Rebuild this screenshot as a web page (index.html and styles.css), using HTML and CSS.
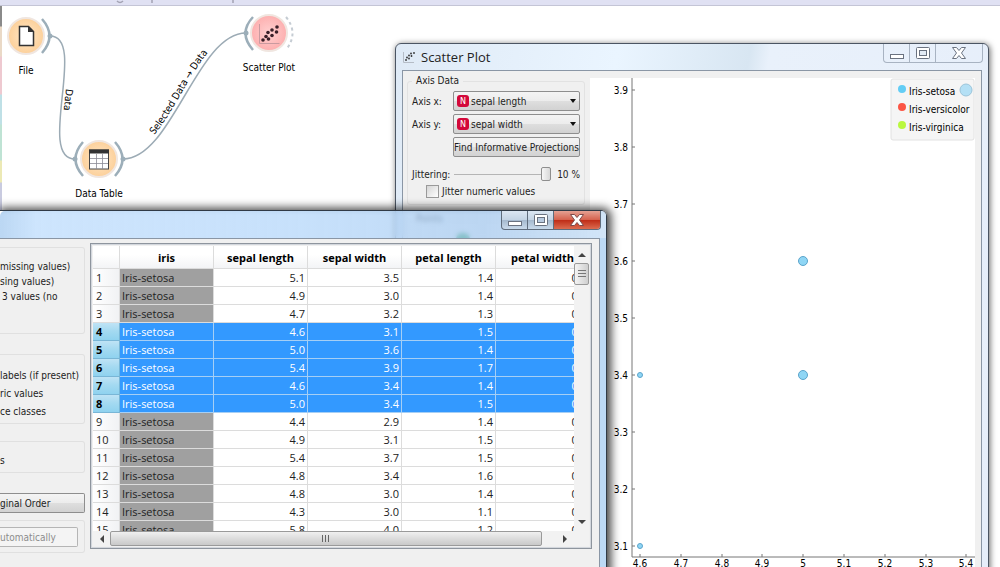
FILE: index.html
```html
<!DOCTYPE html>
<html lang="en">
<head>
    <meta charset="UTF-8">
    <meta name="viewport" content="width=device-width, initial-scale=1.0">
    <title>Orange Workflow</title>
    <link rel="stylesheet" href="styles.css">
</head>
<body>

<div class="desktop">
    <div class="app-bar">
        <svg width="260" height="6" viewBox="0 0 260 6">
            <path d="M117 1q3 3 6 0M152 0v3M233 0v3" fill="none" stroke="#a3a3b4" stroke-width="1.5"/>
        </svg>
    </div>

    <div class="canvas">
        <div class="toolbox-edge"></div>
        <svg class="workflow" width="320" height="201" viewBox="0 6 320 201">
            <defs>
                <path id="link-file" d="M50 36C88 36 36 159 75 159"/>
                <path id="link-plot" d="M123 159C172 159 197 33 246 33"/>
                <radialGradient id="orange"><stop offset="0" stop-color="#ffe6c6"/><stop offset="1" stop-color="#fcd09a"/></radialGradient>
                <radialGradient id="red"><stop offset="0" stop-color="#ffd0d0"/><stop offset="1" stop-color="#fdafaf"/></radialGradient>
            </defs>
            <g class="link">
                <use href="#link-file"/>
                <use href="#link-plot"/>
            </g>
            <text class="link-text" dy="-3"><textPath href="#link-file" startOffset="60">Data</textPath></text>
            <text class="link-text" dy="-4"><textPath href="#link-plot" startOffset="42">Selected Data → Data</textPath></text>

            <!-- File -->
            <circle class="node" cx="26" cy="36" r="18" fill="url(#orange)"/>
            <path class="anchor" d="M42 19Q57 36 42 53"/>
            <circle class="dot" cx="50" cy="36" r="2.5"/>
            <path d="M19.500 26.500h9l5 5v14h-14z" fill="#fff" stroke="#333" stroke-width="1.500"/>
            <path d="M28 26v6h6z" fill="#333"/>
            <text class="node-text" x="26" y="74">File</text>

            <!-- Data Table -->
            <circle class="node" cx="99" cy="159" r="18" fill="url(#orange)"/>
            <path class="anchor" d="M83 142Q68 159 83 176M115 142Q130 159 115 176"/>
            <circle class="dot" cx="75" cy="159" r="2.5"/>
            <circle class="dot" cx="123" cy="159" r="2.5"/>
            <rect x="89.500" y="150" width="19" height="19" fill="#fff" stroke="#444"/>
            <path d="M89 149.500h20v4h-20z" fill="#333"/>
            <path d="M90 158.500h18M90 163.500h18M96.500 154v15M102.500 154v15" stroke="#8b8b96" stroke-width=".8"/>
            <text class="node-text" x="99" y="197">Data Table</text>

            <!-- Scatter Plot -->
            <circle class="node" cx="269" cy="33" r="18" fill="url(#red)"/>
            <path class="anchor" d="M253 17Q238 33 253 50"/>
            <path class="anchor-empty" d="M286 17Q299 33 286 50"/>
            <circle class="dot" cx="246" cy="33" r="2.5"/>
            <path d="M259.500 24v19.500h20" fill="none" stroke="#c99a9f"/>
            <g fill="#3a2029">
                <circle cx="263" cy="40" r="1.8"/><circle cx="266" cy="36.500" r="1.8"/><circle cx="268.500" cy="39" r="1.8"/>
                <circle cx="268" cy="32.500" r="1.8"/><circle cx="272" cy="35.500" r="1.8"/><circle cx="272" cy="30" r="1.8"/>
                <circle cx="276.500" cy="32" r="1.8"/><circle cx="277" cy="27" r="1.8"/>
            </g>
            <text class="node-text" x="269" y="71">Scatter Plot</text>
        </svg>
    </div>

    <section class="window plot-window">
        <header class="titlebar">
            <svg class="title-icon" width="12" height="12" viewBox="0 0 12 12">
                <path d="M.5 1v10.500H11" fill="none" stroke="#b5bcc6"/>
                <g fill="#333"><circle cx="3" cy="9" r=".9"/><circle cx="4" cy="6.500" r=".9"/><circle cx="6" cy="7.500" r=".9"/><circle cx="6" cy="4.500" r=".9"/><circle cx="8.500" cy="5" r=".9"/><circle cx="8" cy="2.500" r=".9"/><circle cx="11" cy="2" r=".9"/></g>
            </svg>
            <h1>Scatter Plot</h1>
            <div class="window-buttons">
                <button aria-label="Minimize"><svg width="16" height="14"><rect x="1.500" y="8.500" width="13" height="4" fill="#fff" stroke="#6a7280"/></svg></button>
                <button aria-label="Maximize"><svg width="16" height="14"><rect x="1.500" y="1.500" width="13" height="11" rx="1" fill="#fff" stroke="#6a7280"/><rect x="4.500" y="4.500" width="7" height="5" fill="#e3ebf5" stroke="#6a7280"/></svg></button>
                <button class="close" aria-label="Close"><svg width="16" height="14"><path d="M1.500 1.500h4L8 4.500l2.500-3h4L10.500 7l4 5.500h-4L8 9.500l-2.500 3h-4L5.500 7z" fill="#fff" stroke="#6a7280"/></svg></button>
            </div>
        </header>
        <div class="client">
            <div class="controls">
                <fieldset class="group">
                    <legend>Axis Data</legend>
                    <div class="axis-row">
                        <label for="axis-x">Axis x:</label>
                        <div class="combo">
                            <span class="badge">N</span>
                            <select id="axis-x"><option>sepal length</option></select>
                        </div>
                    </div>
                    <div class="axis-row">
                        <label for="axis-y">Axis y:</label>
                        <div class="combo">
                            <span class="badge">N</span>
                            <select id="axis-y"><option>sepal width</option></select>
                        </div>
                    </div>
                    <button class="btn find">Find Informative Projections</button>
                    <div class="jitter-row">
                        <label for="jitter">Jittering:</label>
                        <input type="range" id="jitter" min="0" max="10" value="10">
                        <output for="jitter">10 %</output>
                    </div>
                    <label class="check"><input type="checkbox">Jitter numeric values</label>
                </fieldset>
                <fieldset class="group points">
                    <legend>Points</legend>
                    <span class="color-mark"></span>
                </fieldset>
            </div>
            <div class="plot">
                <svg id="plot" viewBox="0 0 385 496">
                    <rect x="301" y="1" width="83" height="61" rx="2" fill="#f5f5f5" stroke="#e2e2e2"/>
                    <g class="legend-text">
                        <circle cx="312" cy="11" r="4" fill="#63cdf5"/><text x="319" y="17">Iris-setosa</text>
                        <circle cx="312" cy="29" r="4" fill="#fb5545"/><text x="319" y="35">Iris-versicolor</text>
                        <circle cx="312" cy="47" r="4" fill="#b9f83f"/><text x="319" y="53">Iris-virginica</text>
                    </g>
                    <path class="axis" d="M42 0V479H385"/>
                    <g id="ticks"></g>
                    <g id="marks"></g>
                </svg>
            </div>
        </div>
    </section>

    <section class="window table-window">
        <header class="titlebar">
            <div class="window-buttons">
                <button aria-label="Minimize"><svg width="16" height="14"><rect x="1.500" y="8.500" width="13" height="4" fill="#fff" stroke="#6a7280"/></svg></button>
                <button aria-label="Maximize"><svg width="16" height="14"><rect x="1.500" y="1.500" width="13" height="11" rx="1" fill="#fff" stroke="#6a7280"/><rect x="4.500" y="4.500" width="7" height="5" fill="#b9cbe0" stroke="#6a7280"/></svg></button>
                <button class="close" aria-label="Close"><svg width="16" height="14"><path d="M1.500 1.500h4L8 4.500l2.500-3h4L10.500 7l4 5.500h-4L8 9.500l-2.500 3h-4L5.500 7z" fill="#fff" stroke="#7d4a4a"/></svg></button>
            </div>
        </header>
        <div class="client">
            <div class="side">
                <div class="box info">
                    <p>missing values)</p>
                    <p>sing values)</p>
                    <p class="indent">3 values (no</p>
                </div>
                <div class="box variables">
                    <p>labels (if present)</p>
                    <p>ric values</p>
                    <p>ce classes</p>
                </div>
                <div class="box selection">
                    <p>s</p>
                </div>
                <button class="btn order">ginal Order</button>
                <div class="box send">
                    <button class="btn" disabled>utomatically</button>
                </div>
            </div>
            <div class="table-frame">
                <div class="table-view">
                    <table>
                        <thead>
                            <tr><th class="num"></th><th>iris</th><th>sepal length</th><th>sepal width</th><th>petal length</th><th>petal width</th></tr>
                        </thead>
                        <tbody id="rows"></tbody>
                    </table>
                </div>
                <div class="scroll-v">
                    <button aria-label="Scroll up"><svg width="8" height="5"><path d="M0 5l4-4 4 4z" fill="#444"/></svg></button>
                    <div class="thumb"><svg width="8" height="10"><path d="M0 1.500h8M0 4.500h8M0 7.500h8" stroke="#777"/></svg></div>
                    <button class="end" aria-label="Scroll down"><svg width="8" height="5"><path d="M0 0l4 4 4-4z" fill="#444"/></svg></button>
                </div>
                <div class="scroll-h">
                    <button aria-label="Scroll left"><svg width="5" height="8"><path d="M5 0L1 4l4 4z" fill="#444"/></svg></button>
                    <div class="thumb"><svg width="10" height="8"><path d="M1.500 0v7M4.500 0v7M7.500 0v7" stroke="#666"/></svg></div>
                    <button class="end" aria-label="Scroll right"><svg width="5" height="8"><path d="M0 0l4 4-4 4z" fill="#444"/></svg></button>
                </div>
            </div>
        </div>
    </section>
</div>

<script src="script.js"></script>
</body>
</html>
```
FILE: styles.css
```css
* {
    box-sizing: border-box;
}

body {
    margin: 0;
    font-family: "DejaVu Sans Condensed", "DejaVu Sans", sans-serif;
    font-size: 10px;
    color: #222;
}

button,
select,
input {
    font: inherit;
    color: inherit;
    margin: 0;
}

p {
    margin: 0;
}

.desktop {
    position: relative;
    height: 100vh;
    overflow: hidden;
    background: #fff;
}

.app-bar {
    height: 6px;
    background: #e0e1f3;
    border-bottom: 1px solid #c4c5d6;
}

.app-bar svg {
    display: block;
}

/* Workflow canvas */
.canvas {
    display: flex;
}

.toolbox-edge {
    width: 2px;
    height: 205px;
    background: linear-gradient(#8a8a8a 20px, #ead9c6 21px, #ead9c6 50px, #eec9d0 51px, #eec9d0 88px, #bfe0e6 89px, #bfe0e6 118px, #bfe3d4 119px, #bfe3d4 154px, #ece9b5 155px, #ece9b5 176px, #c9cbe0 177px);
}

.workflow {
    display: block;
    margin-left: -2px;
}

.link {
    fill: none;
    stroke: #9cabb5;
    stroke-width: 1.5;
}

.node {
    stroke: #f0e6e0;
    stroke-width: 2;
}

.anchor {
    fill: none;
    stroke: #9caeb9;
    stroke-width: 2.5;
}

.anchor-empty {
    fill: none;
    stroke: #c5ccd3;
    stroke-width: 2;
    stroke-dasharray: 3 3;
}

.dot {
    fill: #9caeb9;
}

.node-text {
    text-anchor: middle;
}

/* Windows */
.window {
    position: absolute;
    display: flex;
    flex-direction: column;
    border: 1px solid #4b5563;
    border-radius: 6px 6px 0 0;
}

.titlebar {
    display: flex;
    flex: none;
    align-items: center;
    padding-left: 7px;
    border-radius: 5px 5px 0 0;
}

.titlebar h1 {
    margin: 0 0 0 6px;
    font: 13px "Open Sans", sans-serif;
}

.window-buttons {
    display: flex;
    align-self: flex-start;
    margin-left: auto;
    border: 1px solid #a8b3c2;
    border-top: 0;
    border-radius: 0 0 4px 4px;
    overflow: hidden;
}

.window-buttons button {
    display: flex;
    align-items: center;
    justify-content: center;
    width: 26px;
    height: 18px;
    padding: 0;
    border: 0;
    border-right: 1px solid #a8b3c2;
    background: none;
}

.window-buttons .close {
    width: 46px;
    border-right: 0;
}

.client {
    display: flex;
    flex: 1;
    background: #f0f0f0;
    border: 1px solid #8a96a5;
    border-bottom: 0;
}

.btn {
    height: 20px;
    padding: 0;
    border: 1px solid #8e8e8e;
    border-radius: 2px;
    background: linear-gradient(#f4f4f4, #ececec 50%, #dedede 51%, #d2d2d2);
    white-space: nowrap;
}

/* Scatter plot window */
.plot-window {
    top: 43px;
    left: 395px;
    right: 11px;
    bottom: -10px;
    background: linear-gradient(100deg, #dfeaf6, #eaf5ff 220px, #d8e6f2 350px, #e9f1fb 370px, #e6eefa);
    box-shadow: 1px 1px 6px rgba(0, 0, 0, 0.6);
}

.plot-window .titlebar {
    height: 26px;
    margin-right: 5px;
}

.plot-window .client {
    margin: 0 6px;
    padding: 4px 6px 0 4px;
}

.controls {
    width: 178px;
    flex: none;
}

.group {
    min-width: 0;
    margin: 0;
    padding: 4px 4px 6px;
    border: 1px solid #e2e2e2;
    border-radius: 3px;
}

.group legend {
    padding: 0 4px;
    line-height: 12px;
}

.axis-row,
.jitter-row {
    display: flex;
    align-items: center;
    height: 20px;
    margin-bottom: 3px;
}

.axis-row label {
    width: 41px;
}

.combo {
    position: relative;
    flex: 1;
    min-width: 0;
}

.combo select {
    display: block;
    width: 100%;
    height: 20px;
    padding: 0 0 0 17px;
    appearance: none;
    border: 1px solid #8e8e8e;
    border-radius: 2px;
    background: linear-gradient(#f4f4f4, #ececec 50%, #dedede 51%, #d2d2d2);
}

.combo::after {
    content: "";
    position: absolute;
    top: 8px;
    right: 4px;
    border: 3px solid transparent;
    border-top: 4px solid #111;
    border-bottom: 0;
}

.badge {
    position: absolute;
    top: 4px;
    left: 4px;
    width: 12px;
    height: 12px;
    border-radius: 3px;
    background: #d3083a;
    color: #fff;
    font-size: 9px;
    line-height: 12px;
    text-align: center;
}

.find {
    display: block;
    width: 127px;
    margin-left: 41px;
}

.jitter-row {
    margin-top: 7px;
    margin-bottom: 1px;
}

.jitter-row input {
    flex: 1;
    min-width: 0;
    height: 16px;
    margin: 0 6px 0 4px;
    appearance: none;
    background: linear-gradient(#b5b5b5, #b5b5b5) center / 100% 1px no-repeat;
}

.jitter-row input::-webkit-slider-thumb {
    appearance: none;
    width: 10px;
    height: 14px;
    border: 1px solid #8e8e8e;
    border-radius: 2px;
    background: linear-gradient(90deg, #f6f6f6, #d8d8d8);
}

.check {
    display: flex;
    align-items: center;
    margin-left: 14px;
}

.check input {
    appearance: none;
    width: 13px;
    height: 13px;
    margin-right: 3px;
    border: 1px solid #9a9a9a;
    background: linear-gradient(135deg, #d5d5d5, #fff);
}

.points {
    margin-top: 8px;
    height: 300px;
}

.color-mark {
    display: block;
    width: 14px;
    height: 12px;
    margin: 4px 0 0 44px;
    border-radius: 6px;
    background: #1d9a52;
}

.plot {
    flex: 1;
    margin-top: 3px;
    margin-left: 5px;
    background: #fff;
}

.plot svg {
    display: block;
    width: 100%;
}

.plot .axis {
    fill: none;
    stroke: #777;
}

.tick-x {
    text-anchor: middle;
}

.tick-y {
    text-anchor: end;
}

.mark {
    fill: #8fd6f5;
    stroke: #5ba4cb;
}

.mark.outside {
    fill: #b4e0f5;
    stroke: #9cc5da;
}

/* Data table window */
.table-window {
    top: 210px;
    left: -1px;
    bottom: -10px;
    width: 608px;
    border-color: #303a46;
    border-top-left-radius: 0;
    box-shadow: 2px 0 10px 2px rgba(0, 0, 0, 0.75);
}

.table-window .titlebar {
    height: 27px;
    padding-right: 5px;
    background: linear-gradient(90deg, rgba(170, 205, 240, 0.8), rgba(200, 226, 253, 0.9) 6%, rgba(185, 217, 250, 0.8) 50%, rgba(170, 205, 242, 0.75) 80%, rgba(205, 226, 247, 0.9));
    backdrop-filter: blur(2px);
}

.table-window .window-buttons {
    border-color: #5f6c7c;
    background: linear-gradient(#dbe6f2, #c3d3e4 50%, #a5b9ce 51%, #c9daeb);
}

.table-window .window-buttons button {
    border-color: #5f6c7c;
}

.table-window .window-buttons .close {
    background: linear-gradient(#e5a193, #d5604c 50%, #bf2c17 51%, #dc6c50);
}

.table-window .client {
    padding: 4px 7px 16px 0;
    border-left: 0;
    outline: 6px solid #bcd9f5;
    outline-offset: 0;
    clip-path: inset(0 -6px 0 0);
    margin-right: 6px;
}

.side {
    width: 90px;
    flex: none;
    padding: 4px 5px 0 0;
}

.box {
    border: 1px solid #e0e0e0;
    border-left: 0;
    border-radius: 0 3px 3px 0;
}

.box p {
    line-height: 18px;
    white-space: nowrap;
}

.info {
    height: 87px;
    padding-top: 11px;
}

.box.info p {
    line-height: 15px;
}

.info .indent {
    padding-left: 2px;
}

.variables {
    height: 70px;
    margin-top: 20px;
    padding-top: 12px;
}

.selection {
    height: 32px;
    margin-top: 17px;
    padding-top: 10px;
}

.side .btn {
    display: block;
    width: 100%;
    border-left: 0;
    border-radius: 0 2px 2px 0;
    text-align: left;
}

.order {
    margin-top: 20px;
}

.send {
    height: 33px;
    margin-top: 7px;
    padding: 6px 6px 0 0;
}

.side .btn:disabled {
    border-color: #b5b5b5;
    background: #f4f4f4;
    color: #8c8c8c;
}

.table-frame {
    display: grid;
    grid-template-columns: 1fr 15px;
    grid-template-rows: 285px 15px;
    flex: 1;
    align-self: flex-start;
    min-width: 0;
    padding: 2px;
    border: 1px solid #8e959e;
    outline: 1px solid #d3d7dd;
    outline-offset: -2px;
}

.table-view {
    overflow: hidden;
    background: #fff;
}

table {
    width: 497px;
    table-layout: fixed;
    border-collapse: separate;
    border-spacing: 0;
    font: 11px "Open Sans", sans-serif;
}

th,
td {
    height: 18px;
    padding: 0 2px;
    border-right: 1px solid #dcdcdc;
    border-bottom: 1px solid #dcdcdc;
    line-height: 17px;
    text-align: right;
}

thead th {
    height: 23px;
    padding: 0;
    background: linear-gradient(#fff 40%, #f3f4f6);
    color: #000;
    text-align: center;
}

.num {
    width: 27px;
}

tbody th {
    padding-left: 3px;
    background: linear-gradient(90deg, #fff, #f1f2f4);
    font-weight: normal;
    text-align: left;
}

td.iris {
    background: #a0a0a0;
    text-align: left;
}

.selected td {
    background: #3399ff;
    border-color: #a6cff5;
    color: #fff;
}

/* the selected rows win over the grey class column */
.selected td.iris {
    background: #3399ff;
}

.selected th {
    background: linear-gradient(#bfe3f5, #a5daf1 45%, #8fd2ef);
    border-color: #79b6d6;
    color: #000;
    font-weight: bold;
}

.scroll-v,
.scroll-h {
    display: flex;
    background: #f2f2f2;
}

.scroll-v {
    flex-direction: column;
}

.scroll-h {
    grid-column: 1 / 3;
}

.scroll-v button,
.scroll-h button {
    display: flex;
    align-items: center;
    justify-content: center;
    padding: 0;
    border: 0;
    background: none;
}

.scroll-v button {
    height: 17px;
}

.scroll-h button {
    width: 17px;
}

.scroll-v .end {
    margin-top: auto;
}

.scroll-h .end {
    margin-left: auto;
    width: 47px;
}

.thumb {
    display: flex;
    align-items: center;
    justify-content: center;
    border: 1px solid #9a9a9a;
    border-radius: 2px;
}

.scroll-v .thumb {
    height: 22px;
    background: linear-gradient(90deg, #f4f4f4, #cfcfcf);
}

.scroll-h .thumb {
    flex: 1;
    background: linear-gradient(#f0f0f0, #dcdcdc 50%, #c9c9c9);
}
```
FILE: script.js
```js
const irisRows = [
    ["5.1", "3.5", "1.4", "0.2"],
    ["4.9", "3.0", "1.4", "0.2"],
    ["4.7", "3.2", "1.3", "0.2"],
    ["4.6", "3.1", "1.5", "0.2"],
    ["5.0", "3.6", "1.4", "0.2"],
    ["5.4", "3.9", "1.7", "0.4"],
    ["4.6", "3.4", "1.4", "0.3"],
    ["5.0", "3.4", "1.5", "0.2"],
    ["4.4", "2.9", "1.4", "0.2"],
    ["4.9", "3.1", "1.5", "0.1"],
    ["5.4", "3.7", "1.5", "0.2"],
    ["4.8", "3.4", "1.6", "0.2"],
    ["4.8", "3.0", "1.4", "0.1"],
    ["4.3", "3.0", "1.1", "0.1"],
    ["5.8", "4.0", "1.2", "0.2"]
];

// rows 4 to 8 are selected and sent to the plot
const isSelected = i => i >= 3 && i <= 7;

document.getElementById("rows").innerHTML = irisRows.map((row, i) =>
    `<tr class="${isSelected(i) ? "selected" : ""}"><th>${i + 1}</th><td class="iris">Iris-setosa</td>` +
    row.map(v => `<td>${v}</td>`).join("") + "</tr>"
).join("");

const xPos = v => Math.round(50 + (v - 4.6) * 408);
const yPos = v => Math.round(12 + (3.9 - v) * 570);

let ticks = "";
for (let i = 0; i <= 8; i++) {
    const x = xPos(4.6 + i / 10);
    const y = yPos(3.1 + i / 10);
    ticks += `<path class="axis" d="M${x} 479v-3M42 ${y}h3"/>`;
    ticks += `<text class="tick-x" x="${x}" y="489">${+(4.6 + i / 10).toFixed(1)}</text>`;
    ticks += `<text class="tick-y" x="38" y="${y + 4}">${(3.1 + i / 10).toFixed(1)}</text>`;
}
document.getElementById("ticks").innerHTML = ticks;

document.getElementById("marks").innerHTML = irisRows.filter((row, i) => isSelected(i)).map(([x, y]) => {
    const r = x === "4.6" ? 2.5 : x === "5.0" ? 4.5 : 6;
    return `<circle class="mark ${r === 6 ? "outside" : ""}" cx="${xPos(x)}" cy="${yPos(y)}" r="${r}"/>`;
}).join("");
```
